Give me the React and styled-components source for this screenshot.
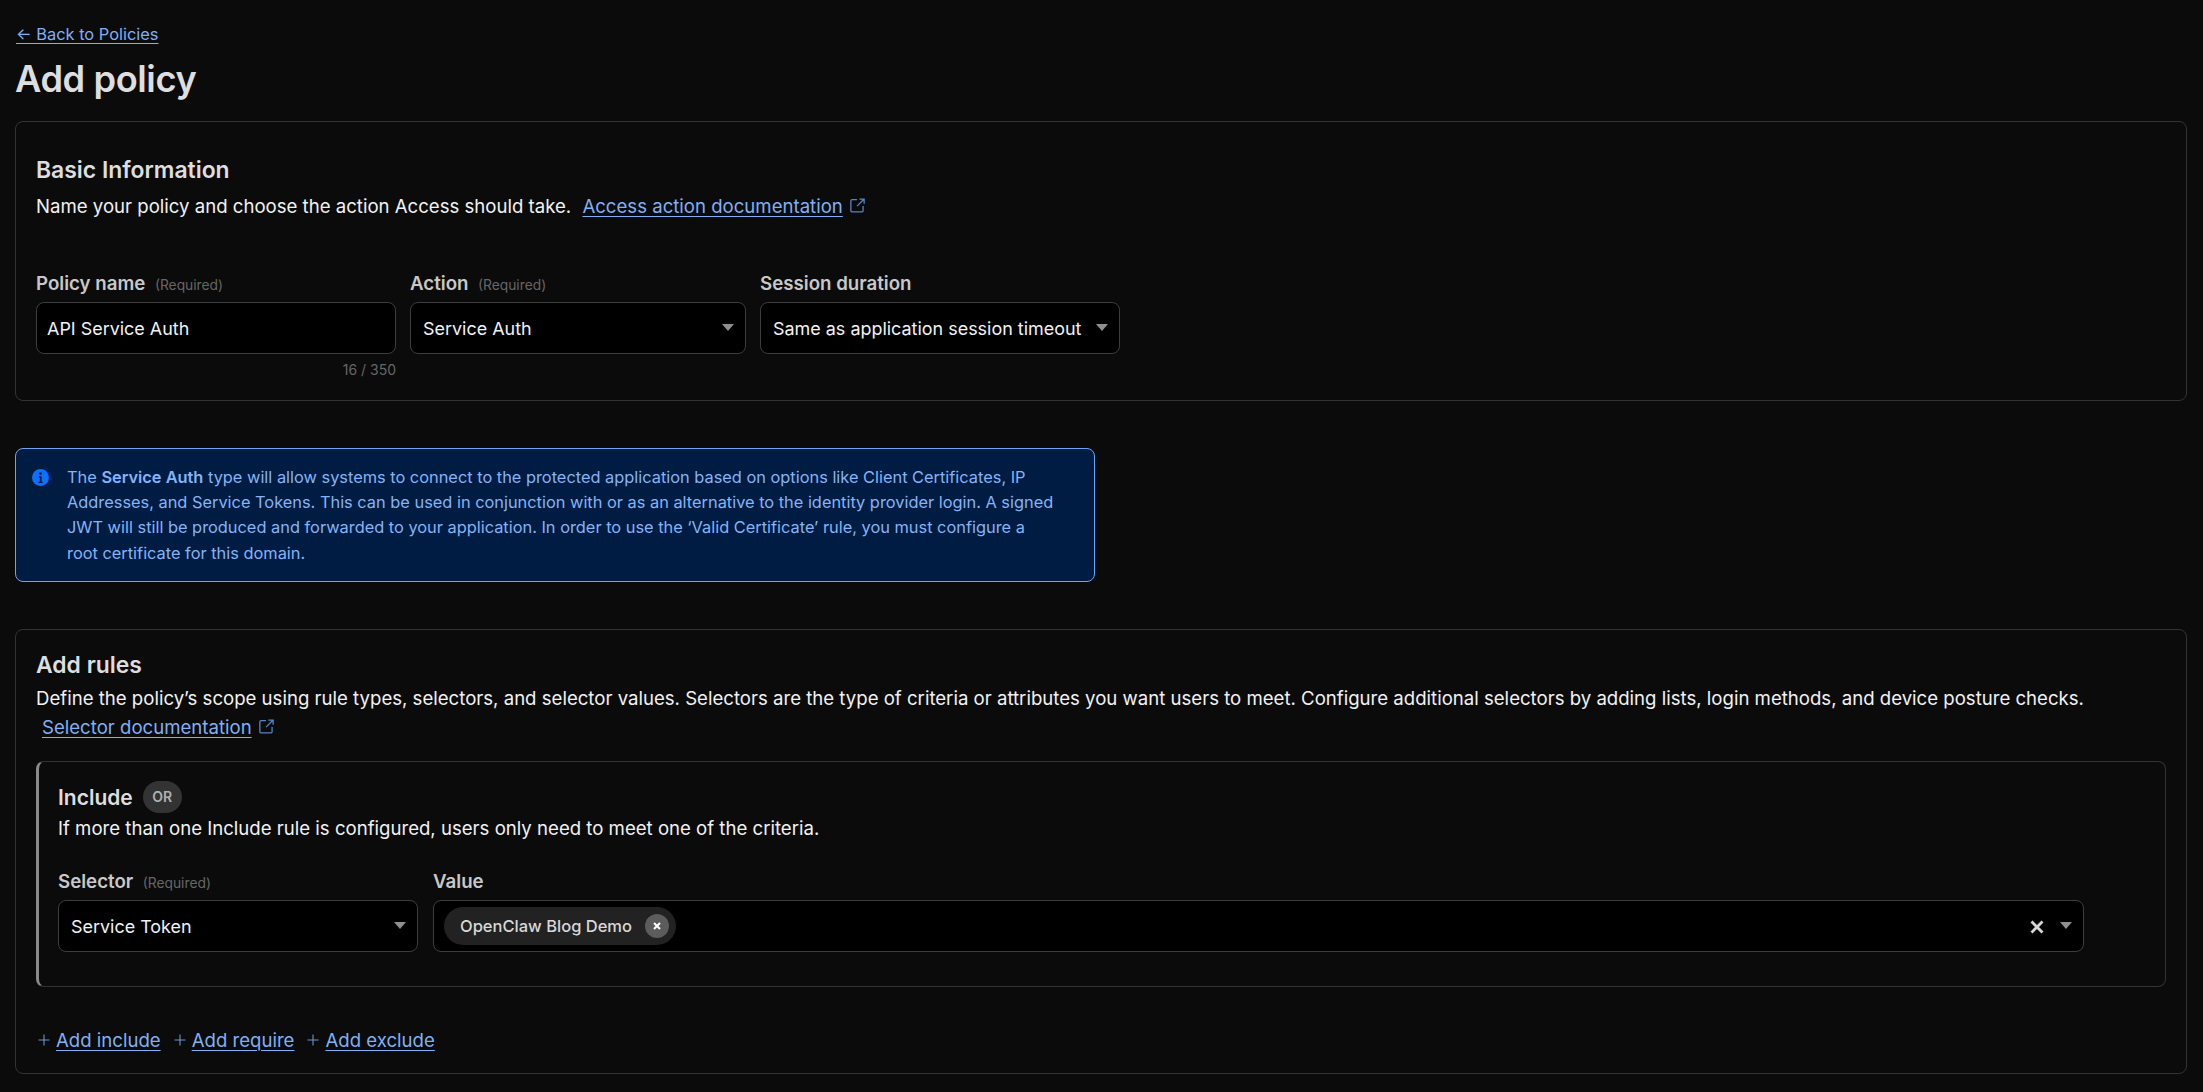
import React from "react";
import styled, { createGlobalStyle } from "styled-components";

const Global = createGlobalStyle`
  html, body { margin: 0; padding: 0; background: #0b0b0b; }
  body { font-family: Inter, "Noto Sans", sans-serif; color: #f2f2f2; -webkit-font-smoothing: antialiased; }
  * { box-sizing: border-box; }
`;

const Page = styled.div`
  padding: 24px 16px 19px 15px;
  height: 1092px;
  overflow: hidden;
  background: #0b0b0b;
`;
const Link = styled.a`
  color: #7fb0f5;
  text-decoration: underline;
  text-underline-offset: 3px;
  text-decoration-thickness: 1.4px;
  cursor: pointer;
`;
const BackLink = styled(Link)`
  display: block;
  width: fit-content;
  font-size: 16.4px;
  line-height: 20px;
  margin-left: 1px;
`;
const Title = styled.h1`
  margin: 13px 0 20px;
  font-size: 36.2px;
  line-height: 44px;
  font-weight: 600;
  letter-spacing: -0.4px;
  color: #dedede;
`;
const Card = styled.section`
  border: 1.4px solid #333;
  border-radius: 8px;
  padding: ${(p) => p.$pad};
  height: ${(p) => p.$h}px;
`;
const CardTitle = styled.h2`
  margin: 0;
  font-size: 22.9px;
  line-height: 28px;
  font-weight: 600;
  color: #dedede;
`;
const Desc = styled.p`
  margin: ${(p) => p.$m || "7px 0 0"};
  font-size: 18.6px;
  line-height: ${(p) => p.$lh || 30}px;
  color: #f2f2f2;
`;
const DocLink = styled(Link)`
  display: inline-block;
  line-height: 22px;
  margin-left: ${(p) => p.$ml || 6}px;
`;
const ExtIcon = () => (
  <ExtSvg viewBox="0 0 14 14" fill="none" stroke="currentColor" strokeWidth="1.2">
    <path d="M6.5 1.6H2a1.2 1.2 0 0 0-1.2 1.2v9A1.2 1.2 0 0 0 2 13h9a1.2 1.2 0 0 0 1.2-1.2V7.5" />
    <path d="M8.8 1h4.4v4.4M13.2 1 6.6 7.6" />
  </ExtSvg>
);
const ExtSvg = styled.svg`
  width: 15px;
  height: 15px;
  margin-left: 7px;
  color: #5585c6;
  vertical-align: 0;
`;
const FieldRow = styled.div`
  display: flex;
  gap: ${(p) => p.$gap || 14}px;
  margin-top: ${(p) => p.$mt}px;
`;
const Field = styled.div`
  width: ${(p) => (p.$w ? p.$w + "px" : "auto")};
  flex: ${(p) => (p.$w ? "none" : "1")};
`;
const Label = styled.label`
  display: flex;
  align-items: baseline;
  gap: 9.5px;
  height: 31px;
  line-height: 25px;
  font-size: 18.7px;
  font-weight: 600;
  color: #c8c8c8;
`;
const Required = styled.span`
  font-size: 13.8px;
  font-weight: 400;
  color: #666;
`;
const Control = styled.div`
  position: relative;
  display: flex;
  align-items: center;
  height: 52px;
  padding: 0 ${(p) => (p.$caret ? 32 : 10)}px 0 ${(p) => p.$pl || 12}px;
  background: #000;
  border: 1.4px solid #3d3d3d;
  border-radius: 8px;
  font-size: 17.95px;
  color: #f2f2f2;
  white-space: nowrap;
`;
const Caret = styled.span`
  position: absolute;
  right: 11px;
  top: 21px;
  width: 0;
  height: 0;
  border-left: 6px solid transparent;
  border-right: 6px solid transparent;
  border-top: 7px solid #8f8f8f;
`;
const Counter = styled.div`
  margin-top: 8px;
  text-align: right;
  font-size: 14px;
  line-height: 15px;
  color: #666;
`;
const Alert = styled.div`
  display: flex;
  gap: 18px;
  width: 1080px;
  height: 134px;
  margin: 47px 0;
  padding: 16px 37px 15px 16px;
  background: #001c42;
  border: 1.4px solid #6ea3ee;
  border-radius: 8px;
  font-size: 16.37px;
  line-height: 25.2px;
  color: #86b3f5;
  b { font-weight: 600; }
`;
const InfoSvg = styled.svg`
  flex: none;
  width: 17px;
  height: 17px;
  margin-top: 4px;
`;
const RuleBox = styled.div`
  border: 1.4px solid #333;
  border-left: 3px solid #8a8a8a;
  border-radius: 8px;
  margin-top: 19px;
  width: 2130px;
  height: 226px;
  padding: 19px 20px 0 19px;
`;
const RuleHead = styled.div`
  display: flex;
  align-items: center;
  gap: 10px;
  height: 32px;
  font-size: 21px;
  font-weight: 600;
  color: #dedede;
`;
const Badge = styled.span`
  width: 39px;
  height: 32px;
  border-radius: 16px;
  background: #333;
  color: #b0b0b0;
  font-size: 14px;
  font-weight: 600;
  padding-bottom: 2px;
  display: flex;
  align-items: center;
  justify-content: center;
`;
const Chip = styled.div`
  display: flex;
  align-items: center;
  gap: 13px;
  height: 38px;
  padding: 0 7px 0 16px;
  border-radius: 19px;
  background: #222;
  font-size: 16.5px;
  font-weight: 500;
  color: #d8d8d8;
`;
const ChipClose = styled.span`
  width: 24px;
  height: 24px;
  border-radius: 50%;
  background: #5c5c5c;
  color: #fff;
  display: flex;
  align-items: center;
  justify-content: center;
`;
const ClearIcon = styled.svg`
  position: absolute;
  right: 39px;
  top: 19px;
  width: 14px;
  height: 14px;
`;
const AddRow = styled.div`
  display: flex;
  gap: 13px;
  margin: 41px 0 0 2px;
  font-size: 18.6px;
  line-height: 24px;
  color: #7fb0f5;
`;
const AddItem = styled.span`
  display: inline-flex;
  align-items: center;
  gap: 6px;
`;
const PlusSvg = styled.svg`
  width: 12px;
  height: 12px;
  color: #6c94cc;
`;
const Plus = () => (
  <PlusSvg viewBox="0 0 12 12" stroke="currentColor" strokeWidth="1.1"><path d="M0.5 6h11M6 0.5v11" /></PlusSvg>
);

const App = () => (
  <Page>
    <Global />
    <BackLink>← Back to Policies</BackLink>
    <Title>Add policy</Title>
    <Card $pad="34px 20px 0 20px" $h={280}>
      <CardTitle>Basic Information</CardTitle>
      <Desc>
        Name your policy and choose the action Access should take. <DocLink>Access action documentation</DocLink>
        <ExtIcon />
      </Desc>
      <FieldRow $mt={50}>
        <Field $w={360}>
          <Label>Policy name <Required>(Required)</Required></Label>
          <Control $pl={10}>API Service Auth</Control>
          <Counter>16 / 350</Counter>
        </Field>
        <Field $w={336}>
          <Label>Action <Required>(Required)</Required></Label>
          <Control $caret>Service Auth<Caret /></Control>
        </Field>
        <Field $w={360}>
          <Label>Session duration</Label>
          <Control $caret>Same as application session timeout<Caret /></Control>
        </Field>
      </FieldRow>
    </Card>
    <Alert>
      <InfoSvg viewBox="0 0 16 16">
        <circle cx="8" cy="8" r="8" fill="#0f6fff" />
        <circle cx="8" cy="4.3" r="1.3" fill="#001c42" />
        <path d="M6.4 6.8H9v5.2h1v1.1H6.2V12h1.2V7.9h-1z" fill="#001c42" />
      </InfoSvg>
      <div>
        The <b>Service Auth</b> type will allow systems to connect to the protected application based on options like Client Certificates, IP Addresses, and Service Tokens. This can be used in conjunction with or as an alternative to the identity provider login. A signed JWT will still be produced and forwarded to your application. In order to use the ‘Valid Certificate’ rule, you must configure a root certificate for this domain.
      </div>
    </Alert>
    <Card $pad="21px 20px 0 20px" $h={445}>
      <CardTitle>Add rules</CardTitle>
      <Desc $m="5px 0 0" $lh={29}>
        Define the policy’s scope using rule types, selectors, and selector values. Selectors are the type of criteria or attributes you want users to meet. Configure additional selectors by adding lists, login methods, and device posture checks. <DocLink $ml={6}>Selector documentation</DocLink>
        <ExtIcon />
      </Desc>
      <RuleBox>
        <RuleHead>Include <Badge>OR</Badge></RuleHead>
        <Desc $m="0">If more than one Include rule is configured, users only need to meet one of the criteria.</Desc>
        <FieldRow $mt={26} $gap={15}>
          <Field $w={360}>
            <Label>Selector <Required>(Required)</Required></Label>
            <Control $caret>Service Token<Caret /></Control>
          </Field>
          <Field $w={1651}>
            <Label>Value</Label>
            <Control $caret $pl={10}>
              <Chip>
                OpenClaw Blog Demo
                <ChipClose>
                  <svg width="10" height="10" viewBox="0 0 10 10" stroke="currentColor" strokeWidth="2"><path d="M2 2l6 6M8 2l-6 6" /></svg>
                </ChipClose>
              </Chip>
              <ClearIcon viewBox="0 0 14 14" stroke="#d6d6d6" strokeWidth="2.8"><path d="M1.5 1.5l11 11M12.5 1.5l-11 11" /></ClearIcon>
              <Caret />
            </Control>
          </Field>
        </FieldRow>
      </RuleBox>
      <AddRow>
        <AddItem><Plus /> <Link>Add include</Link></AddItem>
        <AddItem><Plus /> <Link>Add require</Link></AddItem>
        <AddItem><Plus /> <Link>Add exclude</Link></AddItem>
      </AddRow>
    </Card>
  </Page>
);

export default App;
